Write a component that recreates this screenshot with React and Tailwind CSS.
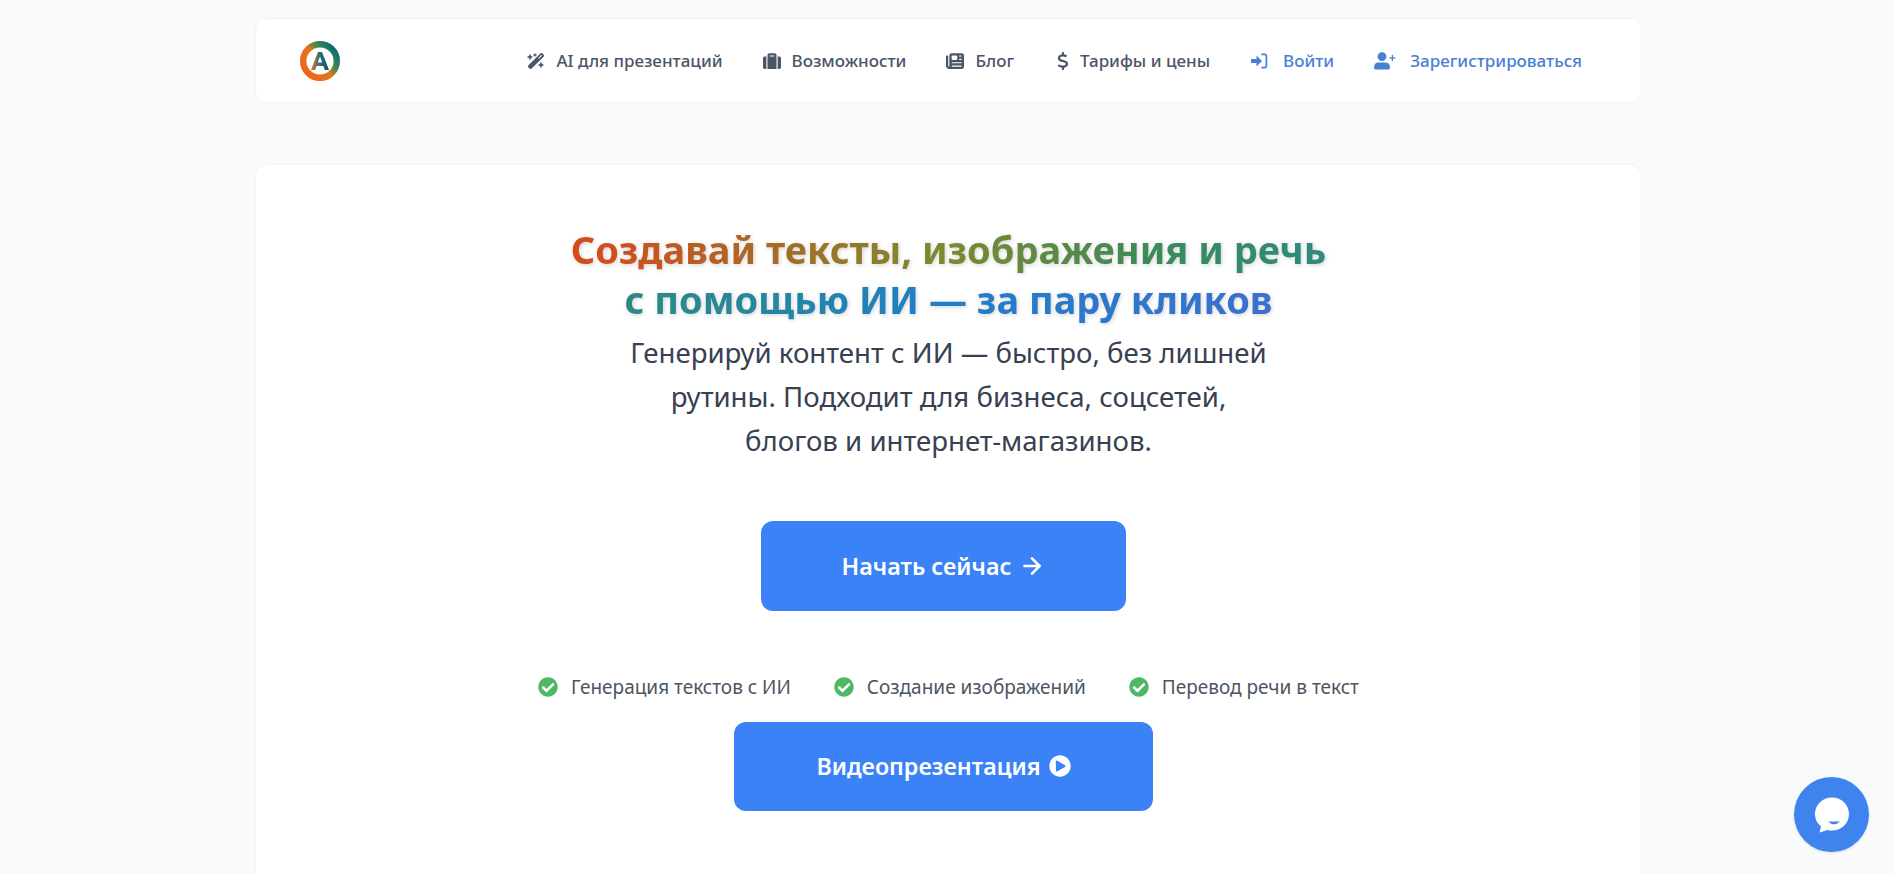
import React from "react";
import { FaSuitcase, FaCheckCircle, FaPlayCircle } from "react-icons/fa";
import { FaWandMagicSparkles, FaNewspaper, FaDollarSign } from "react-icons/fa6";
import { ArrowRight } from "lucide-react";

function Logo() {
  return (
    <svg width="40" height="40" viewBox="0 0 40 40">
      <defs>
        <linearGradient id="ring" x1="0.1" y1="0.9" x2="0.95" y2="0.2">
          <stop offset="0" stopColor="#f0641c" />
          <stop offset="0.5" stopColor="#e2761f" />
          <stop offset="0.68" stopColor="#4f8a4a" />
          <stop offset="1" stopColor="#0f6f6f" />
        </linearGradient>
        <linearGradient id="letter" x1="0" y1="0" x2="1" y2="0">
          <stop offset="0" stopColor="#e8702a" />
          <stop offset="0.5" stopColor="#2a7078" />
          <stop offset="1" stopColor="#134e5e" />
        </linearGradient>
      </defs>
      <circle cx="20" cy="20" r="16.8" fill="none" stroke="url(#ring)" strokeWidth="6.4" />
      <path d="M11 29 L18 11 H22 L29 29 H24.8 L23.4 25 H16.6 L15.2 29 Z M17.8 21.6 H22.2 L20 15.4 Z" fill="url(#letter)" fillRule="evenodd" />
    </svg>
  );
}

function SignInIcon() {
  return (
    <svg width="18" height="18" viewBox="0 0 18 18" fill="currentColor">
      <path d="M1 7 H6.5 V3.4 L12 9 L6.5 14.6 V11 H1 Z" />
      <path d="M12 2.4 H14.5 Q16.4 2.4 16.4 4.4 V13.6 Q16.4 15.6 14.5 15.6 H12" fill="none" stroke="currentColor" strokeWidth="1.7" strokeLinecap="round" />
    </svg>
  );
}

function UserPlusIcon() {
  return (
    <svg width="22" height="18" viewBox="0 0 22 18" fill="currentColor">
      <circle cx="8" cy="4.6" r="4.4" />
      <path d="M4.8 10.4 H11.2 Q16 10.4 16 15.8 Q16 17.4 14.6 17.4 H1.4 Q0 17.4 0 15.8 Q0 10.4 4.8 10.4 Z" />
      <path d="M18.4 3.4 V8.4 M15.9 5.9 H20.9" fill="none" stroke="currentColor" strokeWidth="1.4" strokeLinecap="round" />
    </svg>
  );
}

function NavItem({ icon, label, blue, gap = "gap-[11px]" }) {
  return (
    <a className={`flex items-center ${gap} text-[17px] font-medium ${blue ? "text-[#4a7fd6]" : "text-[#4a5568]"}`}>
      <span className="text-[18px]">{icon}</span>
      <span>{label}</span>
    </a>
  );
}

function Check({ label }) {
  return (
    <div className="flex items-center gap-[13px] text-[#4b5563] text-[19px]">
      <FaCheckCircle className="text-[#4fb862] text-[20px]" />
      <span>{label}</span>
    </div>
  );
}

export default function App() {
  return (
    <div className="h-[874px] overflow-hidden bg-[#f8fafc] [font-family:'Noto_Sans','Open_Sans',sans-serif]">
      <div className="w-[1387px] ml-[255px] pt-[18px]">
        <header className="h-[85px] bg-white rounded-xl border border-[#f1f3f6] flex items-center justify-between pl-[44px] pr-[59px]">
          <Logo />
          <nav className="flex items-center gap-[40px]">
            <NavItem icon={<FaWandMagicSparkles />} label="AI для презентаций" />
            <NavItem icon={<FaSuitcase />} label="Возможности" />
            <NavItem icon={<FaNewspaper />} label="Блог" />
            <NavItem icon={<FaDollarSign />} label="Тарифы и цены" gap="gap-[8px]" />
            <NavItem icon={<SignInIcon />} label="Войти" blue gap="gap-[15px]" />
            <NavItem icon={<UserPlusIcon />} label="Зарегистрироваться" blue gap="gap-[14px]" />
          </nav>
        </header>
        <main className="mt-[61px] h-[800px] bg-white rounded-xl border border-[#f1f3f6] flex flex-col items-center pt-[59px]">
          <h1 className="text-center text-[38px] leading-[50px] font-bold w-[800px] [filter:drop-shadow(1px_1px_2px_rgba(0,0,0,0.18))]">
            <span className="text-transparent bg-clip-text bg-[linear-gradient(90deg,#d9481c,#7a8a30_27%,#3a8a5a_42%,#2a8a86_56%,#1f7fc8_76%,#3b6fd0)]">
              Создавай тексты, изображения и речь
              <br />
              с помощью ИИ — за пару кликов
            </span>
          </h1>
          <p className="mt-[6px] text-center text-[27.6px] leading-[44px] text-[#374151]">
            Генерируй контент с ИИ — быстро, без лишней
            <br />
            рутины. Подходит для бизнеса, соцсетей,
            <br />
            блогов и интернет-магазинов.
          </p>
          <a className="mt-[59px] mr-[10px] w-[365px] h-[90px] rounded-xl bg-[#3b82f6] text-white text-[23.3px] font-semibold flex items-center justify-center gap-2">
            Начать сейчас <ArrowRight size={26} strokeWidth={2.4} />
          </a>
          <div className="mt-[62px] flex items-center gap-[43px]">
            <Check label="Генерация текстов с ИИ" />
            <Check label="Создание изображений" />
            <Check label="Перевод речи в текст" />
          </div>
          <a className="mt-[20px] mr-[10px] w-[419px] h-[89px] rounded-xl bg-[#3b82f6] text-white text-[23.3px] font-semibold flex items-center justify-center gap-2">
            Видеопрезентация <FaPlayCircle className="text-[22px]" />
          </a>
        </main>
      </div>
      <div className="fixed right-[25px] bottom-[22px] w-[75px] h-[75px] rounded-full bg-[#3f84ee] flex items-center justify-center shadow-sm">
        <svg width="38" height="38" viewBox="0 0 38 38">
          <path d="M19 1.5 C9.5 1.5 2 8.8 2 18 C2 23.4 4.6 27.6 8 30.5 L6.5 36.5 L14.5 34 C16 34.4 17.4 34.6 19 34.6 C28.5 34.6 36 27.2 36 18 C36 8.8 28.5 1.5 19 1.5 Z" fill="#fff" />
          <path d="M15 25.5 H27 Q21 31 15 25.5 Z" fill="#3f84ee" />
        </svg>
      </div>
    </div>
  );
}
